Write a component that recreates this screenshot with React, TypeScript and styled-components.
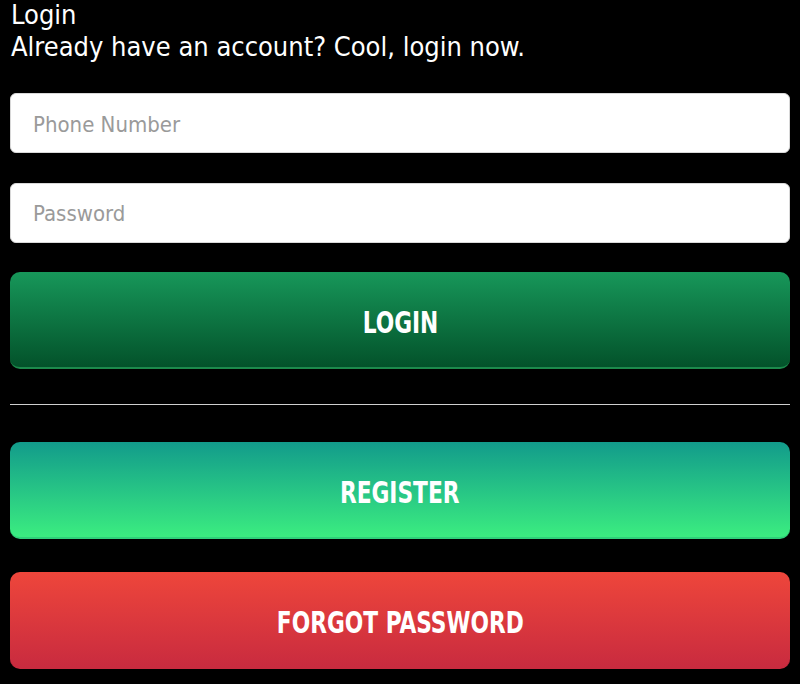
import styled, { createGlobalStyle } from "styled-components";

const GlobalStyle = createGlobalStyle`
  html, body {
    margin: 0;
    padding: 0;
    background: #000;
  }
  body {
    font-family: "DejaVu Sans Condensed", "Liberation Sans Narrow", Roboto, sans-serif;
  }
`;

export default function App() {
  return (
    <>
      <GlobalStyle />
      <LoginContainer>
        <Header>
          <Title>Login</Title>
          <Subtitle>Already have an account? Cool, login now.</Subtitle>
        </Header>
        <Field type="tel" placeholder="Phone Number" />
        <Field type="password" placeholder="Password" />
        <ActionButton variant="login">
          <ButtonLabel>LOGIN</ButtonLabel>
        </ActionButton>
        <Divider />
        <ActionButton variant="register">
          <ButtonLabel>REGISTER</ButtonLabel>
        </ActionButton>
        <ActionButton variant="forgot">
          <ButtonLabel>FORGOT PASSWORD</ButtonLabel>
        </ActionButton>
      </LoginContainer>
    </>
  );
}

const gradients = {
  login: "linear-gradient(to bottom, #17975a, #03522a)",
  register: "linear-gradient(to bottom, #129b8b, #3bed80)",
  forgot: "linear-gradient(to bottom, #ee463b, #c92b3f)",
};

const edges = {
  login: "#1c8a4c",
  register: "#2fd07a",
  forgot: "#c92b3f",
};

export const LoginContainer = styled.div`
  display: flex;
  flex-direction: column;
  padding: 0 10px;
  color: #fff;
`;

export const Header = styled.div`
  display: flex;
  flex-direction: column;
  margin-bottom: 29px;
`;

export const Title = styled.div`
  font-size: 27px;
  line-height: 30px;
  padding-left: 1px;
`;

export const Subtitle = styled.div`
  font-size: 27px;
  line-height: 34px;
  padding-left: 1px;
`;

export const Field = styled.input`
  box-sizing: border-box;
  height: 60px;
  width: 100%;
  margin-bottom: 29.5px;
  padding: 2px 22px 0;
  border: 1px solid #d8d8d8;
  border-radius: 6px;
  background: #fff;
  font-family: inherit;
  font-size: 22px;
  color: #333;
  outline: none;

  &::placeholder {
    color: #9a9a9a;
  }
`;

export const ActionButton = styled.button<{ variant: "login" | "register" | "forgot" }>`
  box-sizing: border-box;
  display: flex;
  align-items: center;
  justify-content: center;
  height: 97px;
  width: 100%;
  padding: 4px 0 0;
  border: none;
  border-bottom: 2px solid ${(p) => edges[p.variant]};
  border-radius: 10px;
  background: ${(p) => gradients[p.variant]};
  color: #fff;
  font-family: inherit;
  font-size: 31px;
  font-weight: 700;
  margin-bottom: 33px;
  cursor: pointer;
`;

export const ButtonLabel = styled.span`
  display: inline-block;
  white-space: nowrap;
  transform: scaleX(0.78);
`;

export const Divider = styled.hr`
  width: 100%;
  margin: 2px 0 37px;
  border: none;
  border-top: 1px solid #cfcfcf;
`;
